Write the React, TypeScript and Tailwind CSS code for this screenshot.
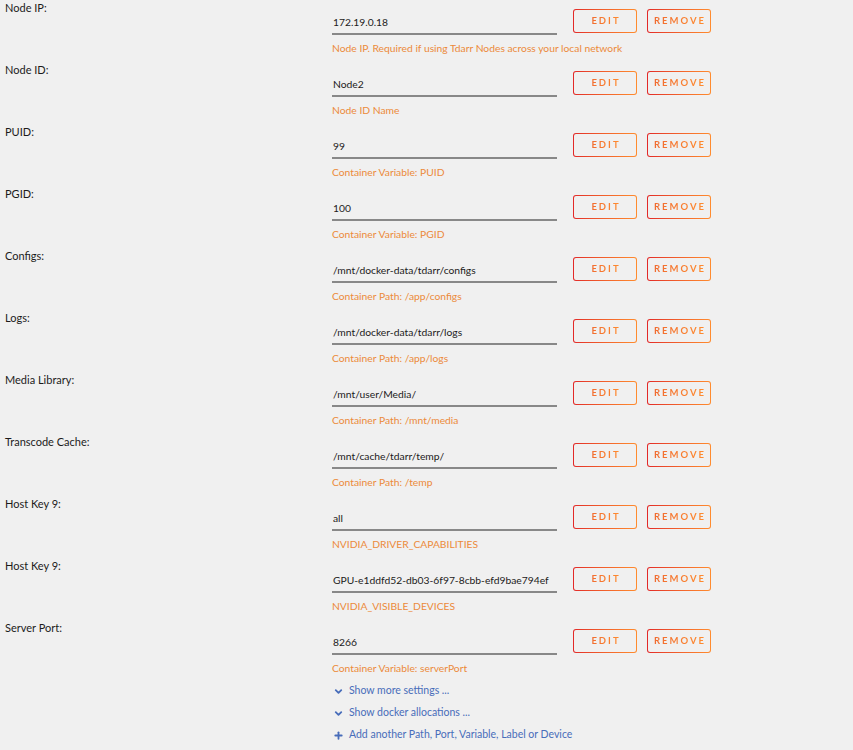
import { ChevronDown, Plus } from "lucide-react";

const ROWS = [
  { label: "Node IP:", value: "172.19.0.18", desc: "Node IP. Required if using Tdarr Nodes across your local network" },
  { label: "Node ID:", value: "Node2", desc: "Node ID Name" },
  { label: "PUID:", value: "99", desc: "Container Variable: PUID" },
  { label: "PGID:", value: "100", desc: "Container Variable: PGID" },
  { label: "Configs:", value: "/mnt/docker-data/tdarr/configs", desc: "Container Path: /app/configs" },
  { label: "Logs:", value: "/mnt/docker-data/tdarr/logs", desc: "Container Path: /app/logs" },
  { label: "Media Library:", value: "/mnt/user/Media/", desc: "Container Path: /mnt/media" },
  { label: "Transcode Cache:", value: "/mnt/cache/tdarr/temp/", desc: "Container Path: /temp" },
  { label: "Host Key 9:", value: "all", desc: "NVIDIA_DRIVER_CAPABILITIES" },
  { label: "Host Key 9:", value: "GPU-e1ddfd52-db03-6f97-8cbb-efd9bae794ef", desc: "NVIDIA_VISIBLE_DEVICES" },
  { label: "Server Port:", value: "8266", desc: "Container Variable: serverPort" },
];

function GradButton({ text }: { text: string }) {
  return (
    <div className="w-[64px] h-[24px] rounded-[3px] p-px bg-gradient-to-r from-[#e22828] to-[#ff8c2f]">
      <div className="w-full h-full rounded-[2px] bg-[#f0f0f0] flex items-center justify-center">
        <span className="text-[9.5px] font-bold tracking-[2px] pl-[2px] bg-gradient-to-r from-[#f06a30] to-[#ff8c2f] bg-clip-text text-transparent">
          {text}
        </span>
      </div>
    </div>
  );
}

export default function App() {
  return (
    <div
      className="w-[853px] h-[750px] bg-[#f0f0f0] text-[#1c1b1b] text-[11px] overflow-hidden"
      style={{ fontFamily: "Lato, 'Noto Sans', sans-serif" }}
    >
      {ROWS.map((r, i) => (
        <div key={i} className="flex h-[62px]">
          <div className="w-[332px] pl-[5px] leading-[16px]">{r.label}</div>
          <div className="flex flex-col">
            <div className="flex items-start pt-[9px]">
              <div className="w-[225px] h-[25px] mt-px pt-[2px] border-b-2 border-[#888] leading-[21px] pl-px text-[10.3px] whitespace-nowrap">
                {r.value}
              </div>
              <div className="flex gap-[10px] ml-[16px]">
                <GradButton text="EDIT" />
                <GradButton text="REMOVE" />
              </div>
            </div>
            <div className="mt-[5px] leading-[16px] text-[#ec8a3a] text-[10.3px] whitespace-nowrap">{r.desc}</div>
          </div>
        </div>
      ))}
      <div className="pl-[333px] -mt-[2px] text-[#486dba] text-[10.5px] flex flex-col">
        {["Show more settings ...", "Show docker allocations ..."].map((t) => (
          <div key={t} className="h-[22px] flex items-center gap-[5px]">
            <ChevronDown className="w-[11px] h-[11px]" strokeWidth={4} />
            <span>{t}</span>
          </div>
        ))}
        <div className="h-[22px] flex items-center gap-[5px]">
          <Plus className="w-[11px] h-[11px]" strokeWidth={4} />
          <span>Add another Path, Port, Variable, Label or Device</span>
        </div>
      </div>
    </div>
  );
}
